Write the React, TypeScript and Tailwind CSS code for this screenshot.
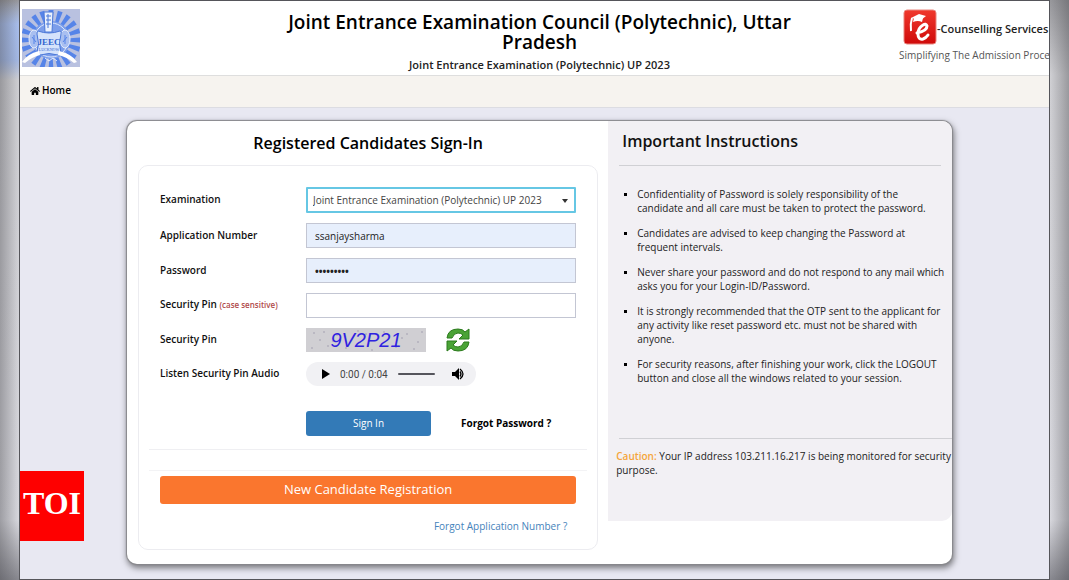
import { useState } from "react";
import { FaHome } from "react-icons/fa";

const instructions = [
  "Confidentiality of Password is solely responsibility of the candidate and all care must be taken to protect the password.",
  "Candidates are advised to keep changing the Password at frequent intervals.",
  "Never share your password and do not respond to any mail which asks you for your Login-ID/Password.",
  "It is strongly recommended that the OTP sent to the applicant for any activity like reset password etc. must not be shared with anyone.",
  "For security reasons, after finishing your work, click the LOGOUT button and close all the windows related to your session.",
];

const rays = Array.from({ length: 20 }, (_, i) => i * 18);

const specks = [
  [8, 5], [22, 18], [14, 12], [31, 7], [40, 20], [18, 4], [6, 20], [52, 3], [66, 22],
  [78, 4], [90, 19], [101, 6], [112, 14], [108, 21], [96, 10], [27, 13], [116, 4], [60, 6],
];

function CouncilLogo() {
  return (
    <svg viewBox="0 0 58 58" className="h-[58px] w-[58px]" aria-label="JEEC Lucknow">
      <rect width="58" height="58" fill="#b9c1e0" />
      {rays.map((r) => (
        <path key={r} d="M26.5 1h5l-1 14h-3z" fill="#5684e8" transform={`rotate(${r} 29 31)`} />
      ))}
      <circle cx="29" cy="31" r="19" fill="#7c9eea" />
      <circle cx="29" cy="31" r="17" fill="none" stroke="#dfe8fb" />
      <ellipse cx="12" cy="30" rx="5" ry="9" fill="#a9bff0" stroke="#e6edfc" />
      <ellipse cx="43" cy="30" rx="5" ry="9" fill="#a9bff0" stroke="#e6edfc" />
      <path d="M12 26v9M10 28l4 5M43 26v9M41 33l4-5" stroke="#5684e8" />
      <path d="M22 3h9l-1 20h-7z" fill="#eaf1fd" stroke="#4b78d8" />
      <path d="M24 7h5M24 11h5M24 15h5M26 5v14" stroke="#4b78d8" />
      <path d="M16 22q11 4 22 0 2 0 1 3-3 9 0 19 0 3-3 2-9-3-18 0-3 1-3-2 3-10 0-19 0-3 1-3z" fill="#d5e3fb" stroke="#4b78d8" />
      <path d="M17 42Q5 45 0 53l3 1q7-6 15-8zM37 42q13 3 18 11l-3 1q-7-6-16-8z" fill="#fff" />
      <path d="M23 49l4 3 4-3 4 3" fill="none" stroke="#e6edfc" />
      <text x="27" y="36" textAnchor="middle" fontSize="9" fontWeight="700" fontFamily="Liberation Serif, serif" fill="#3464cf">JEEC</text>
      <text x="27" y="42" textAnchor="middle" fontSize="4" fontFamily="Liberation Serif, serif" fill="#3464cf">LUCKNOW</text>
    </svg>
  );
}

function ServicesLogo() {
  return (
    <svg viewBox="0 0 34 36" className="h-9 w-[34px] shrink-0" aria-hidden="true">
      <defs>
        <linearGradient id="red" x1="0" y1="0" x2="0" y2="1">
          <stop offset="0" stopColor="#f0382c" />
          <stop offset="1" stopColor="#cf0a0a" />
        </linearGradient>
      </defs>
      <rect x="1" y="1" width="32" height="34" rx="3" fill="url(#red)" stroke="#e9867f" />
      <path d="M8 9l8-4 7 2-5 4z" fill="#fff" />
      <path d="M11 9l-1 4q5-2 9 0l1-4" fill="#fff" />
      <path d="M9 9q-2 6-1 13" fill="none" stroke="#fff" strokeWidth="2" />
      <path d="M14 24q10-2 10-7-1-3-4-1-5 3-5 9 0 6 5 5 3-1 5-4" fill="none" stroke="#fff" strokeWidth="3" strokeLinecap="round" />
    </svg>
  );
}

function RefreshIcon() {
  return (
    <svg viewBox="0 0 24 24" className="h-6 w-6" fill="#4aa336" stroke="#2b7a1c" strokeWidth="1" strokeLinejoin="round">
      <path d="M1 10Q2 1 12 1q5 0 7 3l4-3v10H13l4-4q-2-2-5-2-4 0-6 5z" />
      <path d="M23 14q-1 9-11 9-5 0-7-3l-4 3V13h10l-4 4q2 2 5 2 4 0 6-5z" />
    </svg>
  );
}

function Label({ htmlFor, children }: { htmlFor: string; children: React.ReactNode }) {
  return (
    <label htmlFor={htmlFor} className="pb-0.5 text-[10px] leading-4 font-semibold text-[#111]">
      {children}
    </label>
  );
}

export default function App() {
  const [form, setForm] = useState({
    user: "ssanjaysharma",
    password: "password1",
    pin: "",
  });

  const inputClass =
    "h-[25px] w-full border border-[#c3c6d3] px-2 text-[10px] text-[#222] outline-none";

  return (
    <div className="relative flex min-h-screen flex-col bg-[linear-gradient(to_bottom,#98989c,#d0d0d4_75px,#d8d8de_520px,#88888f)] px-[19px] font-['Open_Sans',sans-serif] text-black">
      {/* Soft edges either side of the frame */}
      <div className="absolute top-0 left-0 h-20 w-[19px] bg-[linear-gradient(to_bottom,transparent,#a9bfee_24px,#a4b9e6_60px,transparent)]" />
      <div className="absolute inset-0 bg-[linear-gradient(to_right,rgba(70,70,75,.4),transparent_19px,transparent_calc(100%-19px),rgba(70,70,75,.4))]" />

      <div className="relative flex grow flex-col overflow-hidden border border-[#55555a] bg-[#e8e8f2]">
        <div className="w-[calc(100%+10px)]">
          <header className="grid h-[75px] grid-cols-[160px_1fr_160px] border-b border-[#dedede] bg-white">
            <div className="pt-2 pl-0.5">
              <CouncilLogo />
            </div>
            <div className="mx-auto max-w-[540px] pt-[11px] text-center">
              <h1 className="text-[19px] leading-5 font-semibold">
                Joint Entrance Examination Council (Polytechnic), Uttar Pradesh
              </h1>
              <p className="mt-[5px] text-[11px] leading-4 font-semibold text-[#222]">
                Joint Entrance Examination (Polytechnic) UP 2023
              </p>
            </div>
            <div className="pt-2 whitespace-nowrap">
              <div className="flex items-center pl-1">
                <ServicesLogo />
                <span className="pt-1 text-[11px] font-semibold text-[#222]">-Counselling Services</span>
              </div>
              <p className="text-[10px] leading-5 text-[#555]">Simplifying The Admission Proce</p>
            </div>
          </header>

          <nav className="flex h-8 items-center border-b border-[#dcdce2] bg-[#f6f3ef] px-[10px] pb-0.5">
            <a href="#" className="flex items-center gap-0.5 text-[10px] font-semibold">
              <FaHome size={10} />
              Home
            </a>
          </nav>

          <main className="mx-auto mt-[13px] mb-[14px] grid w-[80%] max-w-[825px] grid-cols-[7fr_5fr] overflow-hidden rounded-[10px] bg-white shadow-[0_0_1px_1px_#88888c,1px_3px_6px_1px_#77777c]">
            <section className="pr-[10px] pb-[14px] pl-[11px]">
              <h2 className="pt-[10px] text-center text-[16px] leading-6 font-semibold">
                Registered Candidates Sign-In
              </h2>
              <form
                onSubmit={(e) => e.preventDefault()}
                className="mt-[10px] rounded-[10px] border border-[#ececf0] px-[10px] pt-[21px]"
              >
                <div className="grid grid-cols-[146px_1fr] items-center gap-y-[10px] px-[11px]">
                  <Label htmlFor="exam">Examination</Label>
                  <div className="relative">
                    <select
                      id="exam"
                      className="block h-[26px] w-full appearance-none rounded-[1px] border-2 border-[#66c7e4] bg-white px-[5px] text-[10px] text-[#444] outline-none"
                    >
                      <option>Joint Entrance Examination (Polytechnic) UP 2023</option>
                    </select>
                    <svg viewBox="0 0 6 4" className="pointer-events-none absolute top-3 right-2 h-1 w-1.5">
                      <path d="M0 0h6L3 4z" fill="#333" />
                    </svg>
                  </div>

                  <Label htmlFor="user">Application Number</Label>
                  <input
                    id="user"
                    value={form.user}
                    onChange={(e) => setForm({ ...form, user: e.target.value })}
                    className={`${inputClass} bg-[#e7effc]`}
                  />

                  <Label htmlFor="password">Password</Label>
                  <input
                    id="password"
                    type="password"
                    value={form.password}
                    onChange={(e) => setForm({ ...form, password: e.target.value })}
                    className={`${inputClass} bg-[#e7effc] font-bold`}
                  />

                  <Label htmlFor="pin">
                    Security Pin <span className="text-[8px] text-[#b04a4a]">(case sensitive)</span>
                  </Label>
                  <input
                    id="pin"
                    value={form.pin}
                    onChange={(e) => setForm({ ...form, pin: e.target.value })}
                    className={`${inputClass} bg-white`}
                  />

                  <span className="pb-0.5 text-[10px] leading-4 font-semibold text-[#111]">Security Pin</span>
                  <div className="flex h-6 items-center gap-5">
                    <div className="relative h-6 w-[120px] bg-[#d0cfd3] text-center">
                      <svg viewBox="0 0 120 24" className="absolute inset-0 h-6 w-[120px]">
                        {specks.map(([x, y]) => (
                          <circle key={`${x}-${y}`} cx={x} cy={y} r="1" fill="#b3b0bd" />
                        ))}
                      </svg>
                      <span className="relative font-['Liberation_Sans',sans-serif] text-[20px] leading-6 italic text-[#2f22e0]">
                        9V2P21
                      </span>
                    </div>
                    <button type="button" aria-label="Refresh pin">
                      <RefreshIcon />
                    </button>
                  </div>

                  <Label htmlFor="seek">Listen Security Pin Audio</Label>
                  <div className="flex h-6 w-[170px] items-center rounded-full bg-[#f1f1f4] pr-3 pl-4">
                    <button type="button" aria-label="Play">
                      <svg viewBox="0 0 8 10" className="h-2.5 w-2">
                        <path d="M0 0l8 5-8 5z" />
                      </svg>
                    </button>
                    <span className="ml-[10px] font-['Roboto',sans-serif] text-[10px] text-[#444]">
                      0:00 / 0:04
                    </span>
                    <input
                      id="seek"
                      type="range"
                      defaultValue={0}
                      className="ml-[10px] h-0.5 w-[37px] appearance-none rounded bg-[#55555c] [&::-webkit-slider-thumb]:appearance-none"
                    />
                    <button type="button" aria-label="Mute" className="ml-auto">
                      <svg viewBox="0 0 12 12" className="h-3 w-3">
                        <path d="M0 4h3l4-4v12L3 8H0z" />
                        <path d="M8 3.500q2 2.500 0 5M8 1q6 5 0 10" fill="none" stroke="#000" strokeWidth="1.300" />
                      </svg>
                    </button>
                  </div>
                </div>

                <div className="mt-[25px] ml-[157px] flex items-center gap-[30px]">
                  <button
                    type="submit"
                    className="h-[25px] w-[125px] rounded-[3px] bg-[#337ab7] text-[10px] font-medium text-white"
                  >
                    Sign In
                  </button>
                  <a href="#" className="text-[10px] font-bold">
                    Forgot Password ?
                  </a>
                </div>

                <hr className="mt-[13px] border-[#efeff2]" />
                <hr className="mt-5 border-[#f3f3f5]" />

                <div className="px-[11px] pt-[5px]">
                  <button
                    type="button"
                    className="h-7 w-full rounded-[3px] bg-[#fa762e] text-[13px] text-white"
                  >
                    New Candidate Registration
                  </button>
                  <div className="pt-[14px] pr-[9px] pb-[15px] text-right text-[10px] leading-4">
                    <a href="#" className="text-[#4583bb]">
                      Forgot Application Number ?
                    </a>
                  </div>
                </div>
              </form>
            </section>

            <aside className="h-[400px] rounded-br-[10px] bg-[#f2f0f4] pl-2 text-[10px] leading-[14px] text-[#222]">
              <h2 className="pt-2 pl-[6px] text-[16px] leading-6 font-semibold text-[#111]">
                Important Instructions
              </h2>
              <hr className="mt-3 mr-[11px] ml-[3px] border-[#d0d0d4]" />
              <ul className="mt-[21px] mr-[7px] list-[square] space-y-[11px] pl-[21px] marker:text-[8px] marker:text-black">
                {instructions.map((text) => (
                  <li key={text}>{text}</li>
                ))}
              </ul>
              <hr className="mt-[53px] ml-[3px] border-[#d0d0d4]" />
              <p className="mt-[10px]">
                <span className="font-semibold text-[#f5a53a]">Caution:</span> Your IP address
                103.211.16.217 is being monitored for security purpose.
              </p>
            </aside>
          </main>
        </div>
      </div>

      {/* Publisher badge */}
      <div className="absolute bottom-[39px] left-5 flex h-[70px] w-16 items-center justify-center bg-[#fe0000] pb-1.5 font-['Liberation_Serif',serif] text-[32px] font-bold text-white">
        TOI
      </div>
    </div>
  );
}
